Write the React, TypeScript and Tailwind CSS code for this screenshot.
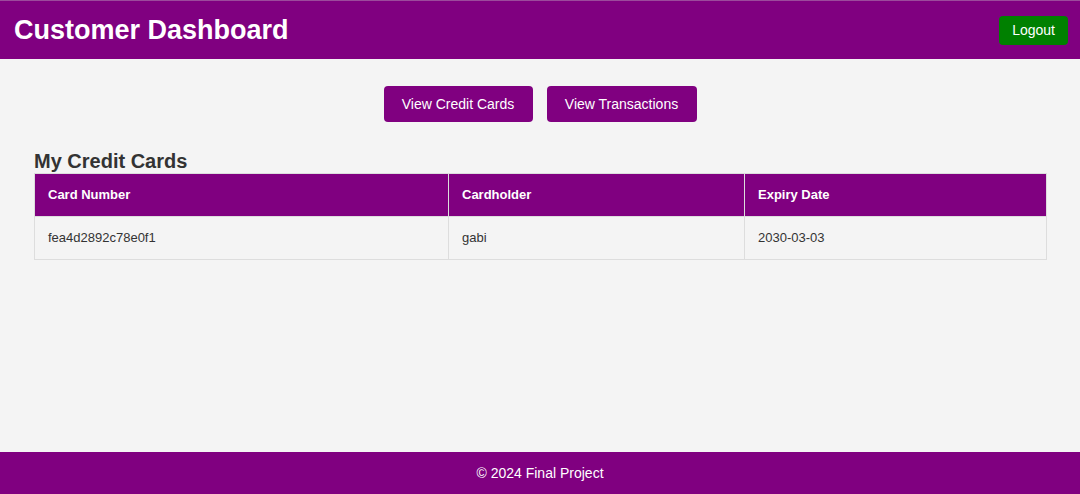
const cards = [{ number: "fea4d2892c78e0f1", holder: "gabi", expiry: "2030-03-03" }]

export default function App() {
  return (
    <div className="flex min-h-[494px] flex-col bg-[#f4f4f4] font-['Liberation_Sans',Arial,sans-serif] text-[#333]">
      <header className="flex h-[59px] items-center justify-between border-t border-[#9c4a9c] bg-[#800080] pl-[14px] pr-3 text-white">
        <h1 className="text-[27px] font-bold leading-none">Customer Dashboard</h1>
        <button className="rounded-[4px] bg-[#008000] px-[13px] py-[6px] text-[14px] leading-[17px] text-white">Logout</button>
      </header>

      <main className="flex-1 px-[34px] pt-[27px]">
        <div className="flex justify-center gap-[14px]">
          <button className="h-[36px] w-[149px] rounded-[4px] bg-[#800080] text-[14px] text-white">View Credit Cards</button>
          <button className="h-[36px] w-[150px] rounded-[4px] bg-[#800080] text-[14px] text-white">View Transactions</button>
        </div>

        <h2 className="mt-[28px] text-[20px] font-bold leading-[23px]">My Credit Cards</h2>
        <table className="w-[1013px] table-fixed border-collapse text-[13px]">
          <colgroup>
            <col className="w-[414px]" />
            <col className="w-[296px]" />
            <col />
          </colgroup>
          <thead>
            <tr className="bg-[#800080] text-left text-white">
              <th className="h-[43px] border border-[#ddd] px-[13px] font-bold">Card Number</th>
              <th className="h-[43px] border border-[#ddd] px-[13px] font-bold">Cardholder</th>
              <th className="h-[43px] border border-[#ddd] px-[13px] font-bold">Expiry Date</th>
            </tr>
          </thead>
          <tbody>
            {cards.map((c) => (
              <tr key={c.number}>
                <td className="h-[43px] border border-[#ddd] px-[13px]">{c.number}</td>
                <td className="h-[43px] border border-[#ddd] px-[13px]">{c.holder}</td>
                <td className="h-[43px] border border-[#ddd] px-[13px]">{c.expiry}</td>
              </tr>
            ))}
          </tbody>
        </table>
      </main>

      <footer className="flex h-[42px] items-center justify-center bg-[#800080] text-[14px] text-white">
        © 2024 Final Project
      </footer>
    </div>
  )
}
